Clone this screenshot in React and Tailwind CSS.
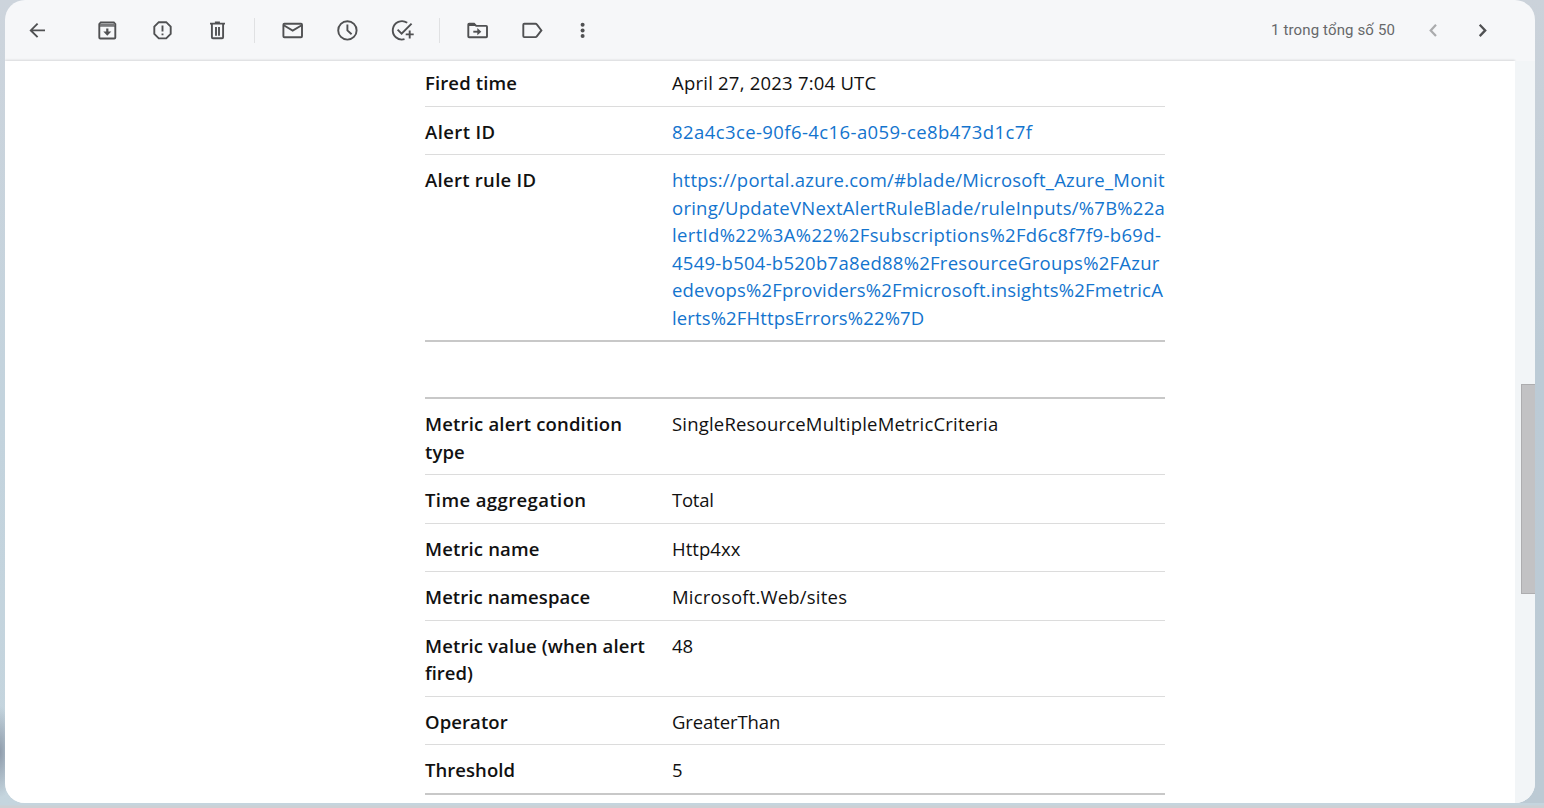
const sans = "font-['Open_Sans','Noto_Sans',sans-serif]";

function Icon({ children, className = '' }) {
  return (
    <svg
      viewBox="0 0 24 24"
      className={`size-6 shrink-0 ${className}`}
      fill="none"
      stroke="#505153"
      strokeWidth="1.9"
    >
      {children}
    </svg>
  );
}

function Toolbar() {
  return (
    <header className="relative z-10 flex h-[61px] shrink-0 items-center pb-px pl-5">
      <Icon>
        <path d="M20 12.4H6M12.6 5.6L5.8 12.4l6.8 6.8" />
      </Icon>
      <Icon className="ml-[46px]">
        <path d="M4.3 6.2L5.800 4.400h13l1.500 1.800V19.500q0 1-1 1h-14q-1 0-1-1z" />
        <path d="M5 6.600h14.600" strokeWidth="2.2" stroke="#77787a" />
        <path d="M4.3 8.100h16" strokeWidth="1" />
        <path d="M12.300 10.500v4" strokeWidth="2.2" />
        <path d="M8.300 13.600h8l-4 4.100z" fill="#505153" stroke="none" />
      </Icon>
      <Icon className="ml-[31px]">
        <path d="M8.8 4.2h7.400l4.500 4.500v7.200l-4.500 4.500H8.8l-4.500-4.500v-7.200z" />
        <path d="M12.5 7.6v5.8" />
        <path d="M12.5 15.4v1.9" />
      </Icon>
      <Icon className="ml-[31px]">
        <path d="M5 5.600h15" strokeWidth="1.8" />
        <path d="M9.9 4.2h5" strokeWidth="1.6" />
        <path d="M6.900 6v13.200q0 1 1 1h9.200q1 0 1-1V6" />
        <path d="M11 9v8.800M14 9v8.800" strokeWidth="1.9" />
      </Icon>
      <div className="ml-[25px] h-[25px] w-px bg-[#e0e1e3]" />
      <Icon className="ml-[25px]">
        <rect x="3.4" y="5.7" width="18.6" height="13.6" rx="1" />
        <path d="M3.700 7.300l9 5.300 9-5.300" />
      </Icon>
      <Icon className="ml-[31px]">
        <circle cx="12.4" cy="12.4" r="9.2" />
        <path d="M12.4 6.6v5.8l4.2 3.8" />
      </Icon>
      <Icon className="ml-[31px]">
        <path d="M17.2 4.8A9.2 9.2 0 1 0 14.5 21.200" />
        <path d="M7.6 11.7l4 4L21.6 5.6" />
        <path d="M19.7 12.4v8M15.7 16.4h8" />
      </Icon>
      <div className="ml-[25px] h-[25px] w-px bg-[#e0e1e3]" />
      <Icon className="ml-[25px]">
        <path d="M3.300 18.400V6.400q0-.8.8-.8h4.900l2.200 2.300h10q.8 0 .8.8v9.700q0 .8-.8.8H4.100q-.8 0-.8-.8z" />
        <path d="M3.300 5h6l2.200 3H3.300z" fill="#505153" stroke="none" />
        <path d="M8.300 13.700h5" />
        <path d="M12.300 10.100v7.2l4-3.600z" fill="#505153" stroke="none" />
      </Icon>
      <Icon className="ml-[31px]">
        <path d="M4.300 5.700h11.200q.8 0 1.300.7l4.600 6-4.600 6q-.5.700-1.300.700H4.300q-1 0-1-1V6.700q0-1 1-1z" />
      </Icon>
      <Icon className="ml-[26px]">
        <g fill="#505153" stroke="none">
          <circle cx="12.600" cy="6.700" r="2" />
          <circle cx="12.600" cy="12.400" r="2" />
          <circle cx="12.600" cy="18.100" r="2" />
        </g>
      </Icon>
      <span className="ml-auto whitespace-nowrap font-['Roboto',sans-serif] text-[15px] tracking-[0.13px] text-[#66686a]">
        1 trong tổng số 50
      </span>
      <Icon className="ml-[26px] opacity-45">
        <path d="M15 6.700l-5.300 5.700 5.300 5.700" strokeWidth="2.200" />
      </Icon>
      <Icon className="mr-[41px] ml-[25px]">
        <path d="M9.700 6.700l5.500 5.700-5.500 5.700" strokeWidth="2.300" />
      </Icon>
    </header>
  );
}

function Row({ label, value, className, link = false }) {
  return (
    <div className={`flex shrink-0 ${className}`}>
      <dt className="w-[247px] shrink-0 font-semibold">
        {label.map(([text, tracking]) => (
          <span key={text} className={`block w-max ${tracking}`}>{text}</span>
        ))}
      </dt>
      <dd className={link ? 'text-[#1374ce]' : ''}>
        {value.map(([text, tracking]) => (
          <span key={text} className={`block w-max ${tracking}`}>{text}</span>
        ))}
      </dd>
    </div>
  );
}

export default function App() {
  return (
    <div className="h-[808px] w-[1544px] overflow-hidden bg-[radial-gradient(ellipse_14px_46px_at_0_752px,#8f9cab,transparent),linear-gradient(0deg,#cdd0d4_0,#cdd0d4_2px,transparent_3px),linear-gradient(180deg,#cdd4dc,#c3d3dd_50%,#c5d5de)] pb-[5px] pl-[5px]">
      <div className="h-[803px] w-[1539px] bg-[linear-gradient(180deg,#cbd2da,#bccbd6_45%,#bccad4)] bg-[length:40px_100%] bg-right bg-no-repeat pr-[9px]">
        <div className="flex h-full flex-col overflow-hidden rounded-[20px] bg-[#f6f7f9]">
          <Toolbar />
          <div className="flex min-h-0 flex-1">
            <main className={`h-full w-[1510px] shrink-0 bg-white pl-[420px] text-[18.5px] leading-[27.5px] text-[#111] shadow-[0_-1px_2px_rgba(0,0,0,0.12)] ${sans}`}>
              <dl className="flex w-[740px] flex-col font-[370]">
                <Row className="h-[46px] border-b border-[#dcdcdc] pt-2" label={[['Fired time', 'tracking-[0.12px]']]} value={[['April 27, 2023 7:04 UTC', 'tracking-[0.22px]']]} />
                <Row className="h-12 border-b border-[#dcdcdc] pt-[11px]" link label={[['Alert ID', 'tracking-[0.4px]']]} value={[['82a4c3ce-90f6-4c16-a059-ce8b473d1c7f', 'tracking-[0.41px]']]} />
                <Row
                  className="h-[187px] border-b-2 border-[#c8c8c8] pt-[11px]"
                  link
                  label={[['Alert rule ID', 'tracking-[0.28px]']]}
                  value={[
                    ['https://portal.azure.com/#blade/Microsoft_Azure_Monit', 'tracking-[0.22px]'],
                    ['oring/UpdateVNextAlertRuleBlade/ruleInputs/%7B%22a', 'tracking-[0.25px]'],
                    ['lertId%22%3A%22%2Fsubscriptions%2Fd6c8f7f9-b69d-', 'tracking-[0.34px]'],
                    ['4549-b504-b520b7a8ed88%2FresourceGroups%2FAzur', 'tracking-[0.26px]'],
                    ['edevops%2Fproviders%2Fmicrosoft.insights%2FmetricA', 'tracking-[0.2px]'],
                    ['lerts%2FHttpsErrors%22%7D', 'tracking-[0.13px]'],
                  ]}
                />
              </dl>
              <dl className="mt-[55px] flex w-[740px] flex-col border-y-2 border-[#c8c8c8] font-[370]">
                <Row className="h-[76px] border-b border-[#dcdcdc] pt-[11px]" label={[['Metric alert condition', 'tracking-[0.18px]'], ['type', 'tracking-[0.1px]']]} value={[['SingleResourceMultipleMetricCriteria', 'tracking-[0.19px]']]} />
                <Row className="h-[49px] border-b border-[#dcdcdc] pt-[11px]" label={[['Time aggregation', 'tracking-[0.4px]']]} value={[['Total', 'tracking-[-0.25px]']]} />
                <Row className="h-12 border-b border-[#dcdcdc] pt-[11px]" label={[['Metric name', 'tracking-[0.14px]']]} value={[['Http4xx', 'tracking-[0.05px]']]} />
                <Row className="h-[49px] border-b border-[#dcdcdc] pt-[11px]" label={[['Metric namespace', 'tracking-[0.08px]']]} value={[['Microsoft.Web/sites', 'tracking-[0.2px]']]} />
                <Row className="h-[76px] border-b border-[#dcdcdc] pt-[10.75px]" label={[['Metric value (when alert', 'tracking-[0.13px]'], ['fired)', '']]} value={[['48', '']]} />
                <Row className="h-12 border-b border-[#dcdcdc] pt-[11px]" label={[['Operator', 'tracking-[0.1px]']]} value={[['GreaterThan', 'tracking-[-0.1px]']]} />
                <Row className="h-12 pt-[11px]" label={[['Threshold', 'tracking-[0.05px]']]} value={[['5', '']]} />
              </dl>
            </main>
            <div className="flex w-5 justify-end bg-[#f2f5f7] pt-[323px]">
              <div className="h-[210px] w-[14px] border border-r-0 border-[#adadaf] bg-[#c2c2c4]" />
            </div>
          </div>
        </div>
      </div>
    </div>
  );
}
